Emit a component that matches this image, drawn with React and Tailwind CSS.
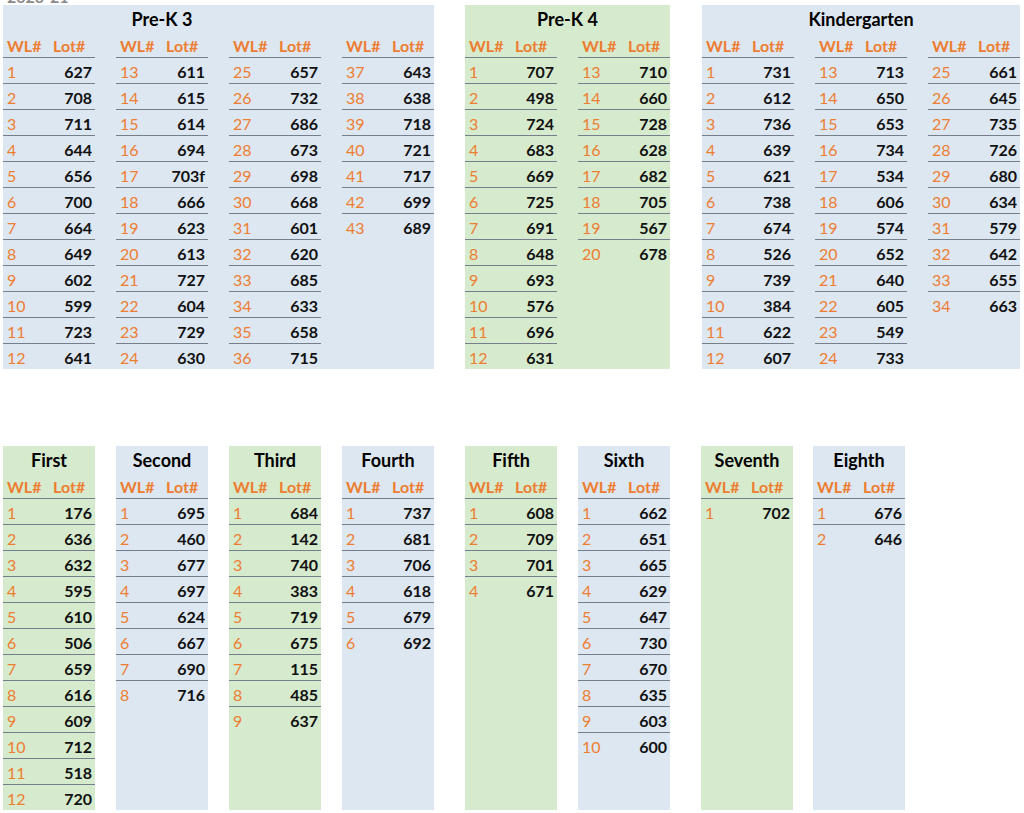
import React from "react";

const BLUE = "bg-[#dde7f1]";
const GREEN = "bg-[#d6eacd]";

function Pair({ start, values }) {
  return (
    <div className="w-[92px] flex flex-col">
      <div className="h-[26px] flex items-center pt-[3px] text-[16px] font-bold text-[#ed7d31] leading-[23px]">
        <div className="w-[46px] pl-[4px]">WL#</div>
        <div className="w-[46px] pl-[4px]">Lot#</div>
      </div>
      {values.map((v, i) => (
        <div
          key={i}
          className="h-[26px] flex items-center pt-[2px] border-t border-[#747f8b] text-[16px] leading-[23px]"
        >
          <div className="w-[46px] pl-[4px] text-[#ed7d31]">{start + i}</div>
          <div className="w-[46px] pr-[3px] text-right font-bold text-[#111]">{v}</div>
        </div>
      ))}
    </div>
  );
}

function Panel({ title, bg, groups, titleWidth, className = "" }) {
  return (
    <div className={`${bg} h-[364px] flex flex-col ${className}`}>
      <div className="h-[26px] flex">
        <div
          className="flex items-center justify-center pt-[3px] text-[18px] font-bold text-black leading-[23px]"
          style={{ width: titleWidth }}
        >
          {title}
        </div>
      </div>
      <div className="flex gap-[21px]">
        {groups.map((g, i) => (
          <Pair key={i} start={g.start} values={g.values} />
        ))}
      </div>
    </div>
  );
}

const preK3 = [
  { start: 1, values: ["627", "708", "711", "644", "656", "700", "664", "649", "602", "599", "723", "641"] },
  { start: 13, values: ["611", "615", "614", "694", "703f", "666", "623", "613", "727", "604", "729", "630"] },
  { start: 25, values: ["657", "732", "686", "673", "698", "668", "601", "620", "685", "633", "658", "715"] },
  { start: 37, values: ["643", "638", "718", "721", "717", "699", "689"] },
];
const preK4 = [
  { start: 1, values: ["707", "498", "724", "683", "669", "725", "691", "648", "693", "576", "696", "631"] },
  { start: 13, values: ["710", "660", "728", "628", "682", "705", "567", "678"] },
];
const kinder = [
  { start: 1, values: ["731", "612", "736", "639", "621", "738", "674", "526", "739", "384", "622", "607"] },
  { start: 13, values: ["713", "650", "653", "734", "534", "606", "574", "652", "640", "605", "549", "733"] },
  { start: 25, values: ["661", "645", "735", "726", "680", "634", "579", "642", "655", "663"] },
];

const grades = [
  { title: "First", bg: GREEN, ml: "ml-[3px]", values: ["176", "636", "632", "595", "610", "506", "659", "616", "609", "712", "518", "720"] },
  { title: "Second", bg: BLUE, ml: "ml-[21px]", values: ["695", "460", "677", "697", "624", "667", "690", "716"] },
  { title: "Third", bg: GREEN, ml: "ml-[21px]", values: ["684", "142", "740", "383", "719", "675", "115", "485", "637"] },
  { title: "Fourth", bg: BLUE, ml: "ml-[21px]", values: ["737", "681", "706", "618", "679", "692"] },
  { title: "Fifth", bg: GREEN, ml: "ml-[31px]", values: ["608", "709", "701", "671"] },
  { title: "Sixth", bg: BLUE, ml: "ml-[21px]", values: ["662", "651", "665", "629", "647", "730", "670", "635", "603", "600"] },
  { title: "Seventh", bg: GREEN, ml: "ml-[31px]", values: ["702"] },
  { title: "Eighth", bg: BLUE, ml: "ml-[20px]", values: ["676", "646"] },
];

export default function App() {
  return (
    <div
      className="w-[1024px] h-[813px] bg-white overflow-hidden"
      style={{ fontFamily: "Lato, 'Open Sans', sans-serif" }}
    >
      <div className="h-[5px] overflow-hidden">
        <div className="ml-[7px] -mt-[11px] text-[16px] leading-[16px] font-bold text-[#8a8a8a]">2020-21</div>
      </div>
      <div className="flex">
        <Panel className="ml-[3px]" title="Pre-K 3" bg={BLUE} groups={preK3} titleWidth={318} />
        <Panel className="ml-[31px]" title="Pre-K 4" bg={GREEN} groups={preK4} titleWidth={205} />
        <Panel className="ml-[32px]" title="Kindergarten" bg={BLUE} groups={kinder} titleWidth={318} />
      </div>
      <div className="h-[77px]" />
      <div className="flex">
        {grades.map((g) => (
          <Panel
            key={g.title}
            className={g.ml}
            title={g.title}
            bg={g.bg}
            groups={[{ start: 1, values: g.values }]}
            titleWidth={92}
          />
        ))}
      </div>
    </div>
  );
}
